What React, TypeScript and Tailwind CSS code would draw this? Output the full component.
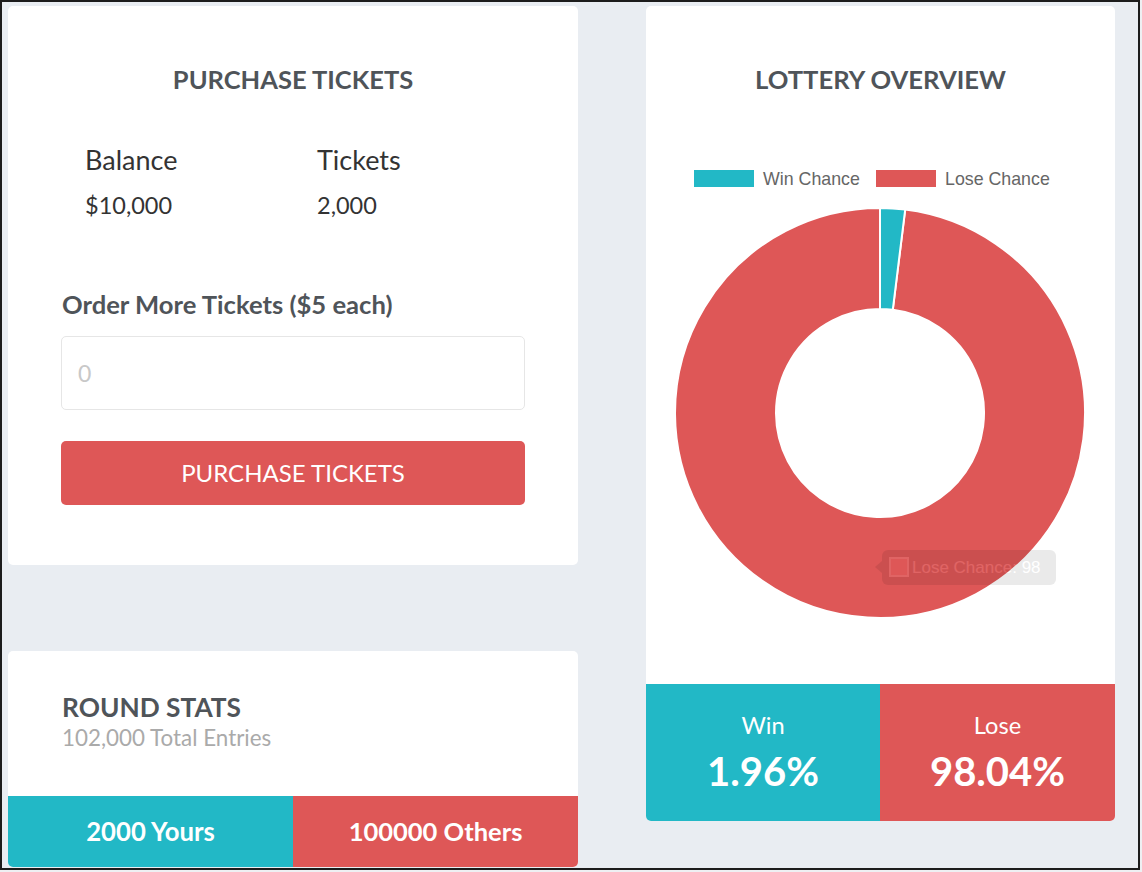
import React from "react";

const TEAL = "#22b8c6";
const RED = "#de5757";

function sector(cx: number, cy: number, R: number, r: number, a0: number, a1: number) {
  const rad = (d: number) => (d * Math.PI) / 180;
  const p = (rr: number, a: number) => [cx + rr * Math.cos(rad(a)), cy + rr * Math.sin(rad(a))];
  const [x0, y0] = p(R, a0);
  const [x1, y1] = p(R, a1);
  const [x2, y2] = p(r, a1);
  const [x3, y3] = p(r, a0);
  const large = a1 - a0 > 180 ? 1 : 0;
  return `M${x0} ${y0} A${R} ${R} 0 ${large} 1 ${x1} ${y1} L${x2} ${y2} A${r} ${r} 0 ${large} 0 ${x3} ${y3} Z`;
}

function Donut() {
  const cx = 234;
  const cy = 257;
  const R = 205;
  const r = 104;
  const win = 1.96;
  const a0 = -90;
  const a1 = -90 + (win / 100) * 360;
  const a2 = 270;
  return (
    <svg width="469" height="480" viewBox="0 0 469 480" className="block">
      <rect x="48" y="14" width="60" height="17" fill={TEAL} />
      <text x="117" y="28.5" fontFamily="'Liberation Sans', Arial, sans-serif" fontSize="17.8" fill="#666">
        Win Chance
      </text>
      <rect x="230" y="14" width="60" height="17" fill={RED} />
      <text x="299" y="28.5" fontFamily="'Liberation Sans', Arial, sans-serif" fontSize="17.8" fill="#666">
        Lose Chance
      </text>
      <path d={sector(cx, cy, R, r, a1, a2)} fill={RED} stroke="#fff" strokeWidth="2" />
      <path d={sector(cx, cy, R, r, a0, a1)} fill={TEAL} stroke="#fff" strokeWidth="2" />
      <g opacity="0.08">
        <path d="M229 411 L236 405 L236 417 Z" fill="#000" />
        <rect x="236" y="394" width="174" height="35" rx="6" fill="#000" />
        <rect x="244" y="402" width="18" height="18" fill={RED} stroke="#fff" strokeWidth="2" />
        <text x="266" y="417" fontFamily="'Liberation Sans', Arial, sans-serif" fontSize="17" fill="#fff">
          Lose Chance: 98
        </text>
      </g>
    </svg>
  );
}

export default function App() {
  return (
    <div className="w-[1142px] h-[872px] bg-[#eef0f3]" style={{ fontFamily: "Lato, 'Open Sans', sans-serif" }}>
      <div className="box-border w-[1140px] h-[870px] border-2 border-[#1c1c1c] bg-[#e9edf2] pl-[6px] pt-[4px] flex gap-[68px]">
        {/* Left column */}
        <div className="w-[570px] flex flex-col gap-[86px]">
          <div className="h-[559px] bg-white rounded-[5px] pt-[59px] px-[53px] flex flex-col">
            <h2 className="text-center text-[25.5px] leading-[29px] font-bold text-[#4f5459]">PURCHASE TICKETS</h2>
            <div className="mt-[51px] pl-[24px] grid grid-cols-[232px_1fr] text-[#333]">
              <div className="text-[27px] leading-[29px]">Balance</div>
              <div className="text-[27px] leading-[29px]">Tickets</div>
              <div className="mt-[18px] text-[23.5px] leading-[26px]">$10,000</div>
              <div className="mt-[18px] text-[23.5px] leading-[26px]">2,000</div>
            </div>
            <label className="mt-[72px] pl-[1px] text-[25.6px] leading-[29px] font-bold text-[#4f5459]">
              Order More Tickets ($5 each)
            </label>
            <input
              type="text"
              placeholder="0"
              className="mt-[17px] h-[74px] w-full box-border border border-[#e6e6e6] rounded-[5px] px-[16px] text-[23px] text-[#333] placeholder:text-[#c8c8c8] outline-none"
              style={{ fontFamily: "Lato, sans-serif" }}
            />
            <button className="mt-[31px] h-[64px] w-full rounded-[5px] bg-[#de5757] text-white text-[24px] leading-[28px]">
              PURCHASE TICKETS
            </button>
          </div>
          <div className="h-[216px] bg-white rounded-[5px] flex flex-col overflow-hidden">
            <div className="pt-[42px] pl-[54px]">
              <h2 className="text-[26.3px] leading-[29px] font-bold text-[#4f5459]">ROUND STATS</h2>
              <div className="mt-[4px] text-[22.4px] leading-[24px] text-[#aaaaaa]">102,000 Total Entries</div>
            </div>
            <div className="mt-auto h-[71px] flex">
              <div className="w-[285px] bg-[#22b8c6] flex items-center justify-center text-white text-[25.7px] font-bold">
                2000 Yours
              </div>
              <div className="flex-1 bg-[#de5757] flex items-center justify-center text-white text-[25.5px] font-bold">
                100000 Others
              </div>
            </div>
          </div>
        </div>
        {/* Right column */}
        <div className="w-[469px]">
          <div className="h-[815px] bg-white rounded-[5px] flex flex-col overflow-hidden pt-[59px]">
            <h2 className="text-center text-[25.6px] leading-[29px] font-bold text-[#4f5459]">LOTTERY OVERVIEW</h2>
            <div className="mt-[62px]">
              <Donut />
            </div>
            <div className="mt-auto h-[137px] flex">
              <div className="w-[234px] bg-[#22b8c6] flex flex-col items-center justify-center text-white">
                <div className="text-[23.6px] leading-[26px]">Win</div>
                <div className="mt-[10px] text-[40px] leading-[46px] font-bold">1.96%</div>
              </div>
              <div className="flex-1 bg-[#de5757] flex flex-col items-center justify-center text-white">
                <div className="text-[23.6px] leading-[26px]">Lose</div>
                <div className="mt-[10px] text-[40px] leading-[46px] font-bold">98.04%</div>
              </div>
            </div>
          </div>
        </div>
      </div>
    </div>
  );
}
